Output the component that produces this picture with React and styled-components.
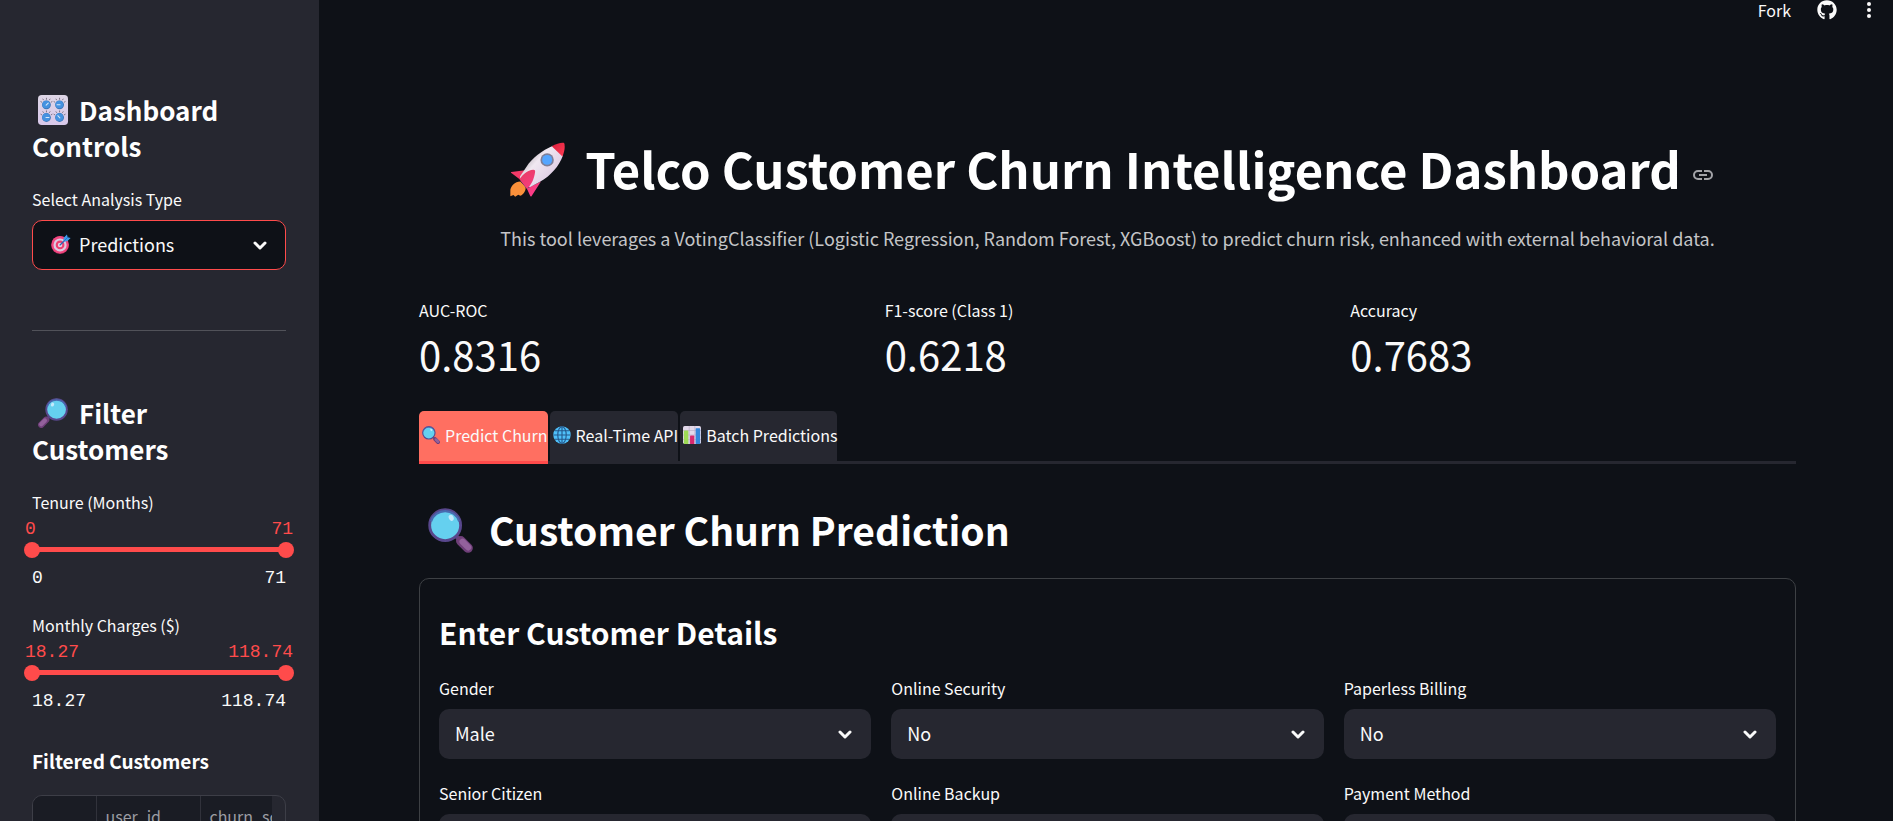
import React, { useId, useState } from 'react';
import styled, { createGlobalStyle, css } from 'styled-components';
import { FaGithub } from 'react-icons/fa';

const GlobalStyle = createGlobalStyle`
  *, *::before, *::after { box-sizing: border-box; }
  body {
    margin: 0;
    background: #0e1117;
    color: #fafafa;
    font-family: "Noto Sans CJK SC", "Noto Sans", sans-serif;
    font-size: 16px;
  }
  h1, h2, h3, h4, p { margin: 0; }
  button, select, input { font: inherit; color: inherit; }
`;

/* ---------- page frame ---------- */

const Page = styled.div`
  display: flex;
  height: 100vh;
`;

const pane = css`
  overflow-x: hidden;
  overflow-y: auto;
  scrollbar-width: none;
`;

const Sidebar = styled.aside`
  ${pane}
  flex: 0 0 319px;
  padding: 92px 33px 0 32px;
  background: #262730;
`;

const Main = styled.main`
  ${pane}
  flex: 1;
  min-width: 0;
`;

const Toolbar = styled.header`
  display: flex;
  justify-content: flex-end;
  gap: 26px;
  height: 20px;
  padding-right: 18px;
`;

const ToolButton = styled.button`
  display: flex;
  align-items: center;
  justify-content: center;
  min-width: 12px;
  height: 20px;
  padding: 0;
  border: 0;
  background: none;
  line-height: 20px;
  cursor: pointer;
`;

const Content = styled.div`
  padding: 115px 97px 80px 100px;
`;

/* ---------- text ---------- */

const PageTitle = styled.h1`
  color: #fff;
  font-size: 49px;
  font-weight: 700;
  line-height: 66px;
  text-align: center;
`;

const AnchorLink = styled.a`
  display: inline-block;
  margin-left: 12px;
  color: #a3a4a8;
  line-height: 0;
  vertical-align: 9px;
`;

const Intro = styled.p`
  margin-top: 22px;
  color: #c4c5c7;
  font-size: 18px;
  line-height: 30px;
  text-align: center;
`;

const SectionTitle = styled.h2`
  margin: 38px 0 22px;
  color: #fff;
  font-size: 39px;
  font-weight: 700;
  line-height: 54px;
`;

const FormTitle = styled.h3`
  margin-bottom: 23px;
  color: #fff;
  font-size: 30px;
  font-weight: 700;
  line-height: 42px;
`;

const SideTitle = styled.h2`
  margin-bottom: 23px;
  color: #fff;
  font-size: 26px;
  font-weight: 700;
  line-height: 36px;
`;

const SideSubtitle = styled.h4`
  margin: 35px 0 20px;
  color: #fff;
  font-size: 19px;
  font-weight: 700;
  line-height: 28px;
`;

const Divider = styled.hr`
  height: 1px;
  margin: 60px 0 64px;
  border: 0;
  background: #515259;
`;

/* ---------- emoji drawings ---------- */

const Emoji = styled.svg`
  display: inline-block;
  flex: none;
  width: ${p => p.$size}px;
  height: ${p => p.$size}px;
  margin: 0 ${p => p.$after || 0}px 0 ${p => p.$before || 0}px;
  vertical-align: ${p => p.$drop || 0}px;
`;

function Rocket(props) {
  return (
    <Emoji viewBox="0 0 32 32" aria-hidden="true" {...props}>
      <defs>
        <linearGradient id="rk-body" x1="10" y1="8" x2="24" y2="20" gradientUnits="userSpaceOnUse">
          <stop stopColor="#b9b2ba" /><stop offset=".35" stopColor="#f0e8f1" /><stop offset="1" stopColor="#e0cfe6" />
        </linearGradient>
        <linearGradient id="rk-fin" x1="8" y1="18" x2="17" y2="30" gradientUnits="userSpaceOnUse">
          <stop stopColor="#e93d68" /><stop offset="1" stopColor="#ff3b8d" />
        </linearGradient>
        <linearGradient id="rk-nose" x1="24" y1="2" x2="31" y2="8" gradientUnits="userSpaceOnUse">
          <stop stopColor="#d9203e" /><stop offset="1" stopColor="#ff3a52" />
        </linearGradient>
      </defs>
      <path d="M6 23c-3 0-6 3-5.8 5.500L.2 31.500l1.800-.7 1 1 1.800-1.100 1.200.6C8 30.500 9.500 28 9 26z" fill="#f9903a" />
      <path d="M6 22.500 8.500 21l3.500 5-1.800 1.800z" fill="#47407e" />
      <path d="M11 16.200.8 17.400C.3 17.600.6 18 1 18.200L6 22z" fill="#f23a68" />
      <path d="m18 23-5.500 8.600c-.3.300-.7.100-.8-.3L9.800 27z" fill="url(#rk-fin)" />
      <path d="M25 2.200c-6.500 2.800-12 7-15.500 12.300L5.800 20c-.6 1.100 5 6.500 6 6.200l5.400-3C24 19.500 28.500 14 30.800 7.800z" fill="url(#rk-body)" />
      <path d="M24.300 2.500C27 1 30 .2 31.500.6c.7 1.500.2 5.200-1 7.800z" fill="url(#rk-nose)" />
      <path d="M5.600 21.800c1.500-2.800 4.500-5.500 8-5.700.7 0 1.200.5 1 1.300-.5 4-2.300 7.700-4.800 9.800z" fill="url(#rk-fin)" />
      <circle cx="21.600" cy="10.400" r="3.900" fill="#7e7f99" />
      <circle cx="21.600" cy="10.400" r="2.900" fill="#54a5ff" />
    </Emoji>
  );
}

function Knobs(props) {
  const dials = [[9, 10.500, 45], [23, 10.500, -90], [9, 24, 90], [23, 24, -45]];
  return (
    <Emoji viewBox="0 0 32 32" aria-hidden="true" {...props}>
      <defs>
        <linearGradient id="kn-bg" x1="0" y1="0" x2="0" y2="1">
          <stop stopColor="#ded6e6" /><stop offset="1" stopColor="#d8c8ea" />
        </linearGradient>
      </defs>
      <rect width="32" height="32" rx="4" fill="url(#kn-bg)" />
      {dials.map(([x, y, turn]) => (
        <g key={`${x}-${y}`} transform={`translate(${x} ${y})`}>
          <path d="M0-7.500v2M-4-6.500l1 1.500M4-6.500l-1 1.500M-6.300-3.600l1.600.9M6.300-3.600l-1.600.9" stroke="#77707f" strokeWidth="1" />
          <circle r="4.700" fill="#3a76b8" />
          <circle cx="-.3" cy="-.4" r="4.100" fill="#4592e0" />
          <path d="M0 .5v-3.200" stroke="#d5e9fb" strokeWidth="1.100" strokeLinecap="round" transform={`rotate(${turn})`} />
        </g>
      ))}
    </Emoji>
  );
}

function Magnifier({ flipped, ...props }) {
  return (
    <Emoji viewBox="0 0 32 32" aria-hidden="true" {...props}>
      <g transform={flipped ? 'translate(32 0) scale(-1 1)' : undefined}>
        <path d="m19.500 19.500 3 3" stroke="#63427f" strokeWidth="3" />
        <path d="m23.300 23.300 5.200 5.200" stroke="#6f3f79" strokeWidth="6.800" strokeLinecap="round" />
        <path d="m24.600 24 4 4" stroke="#93619c" strokeWidth="4.400" strokeLinecap="round" />
        <circle cx="12.200" cy="12.200" r="11.300" fill="#65d0ef" />
        <circle cx="12.200" cy="12.200" r="11" fill="none" stroke="#58478c" strokeWidth="2" />
        <path d="M2.200 9.500a10.500 10.500 0 0 1 20 0" fill="none" stroke="#486bb0" strokeWidth="1.500" />
        <ellipse cx="16.500" cy="7" rx="1.700" ry="2.200" fill="#c3e9fb" transform="rotate(-25 16.500 7)" />
      </g>
    </Emoji>
  );
}

function Target(props) {
  return (
    <Emoji viewBox="0 0 32 32" aria-hidden="true" {...props}>
      <circle cx="14.500" cy="17.500" r="14.300" fill="#c92f68" />
      <circle cx="14.500" cy="17" r="13.700" fill="#f0487f" />
      <circle cx="14.500" cy="17.500" r="10.500" fill="#dccbe2" />
      <circle cx="14.500" cy="17.500" r="7" fill="#ed3f70" />
      <circle cx="14.500" cy="17.500" r="3.600" fill="#e7d3e4" />
      <path d="m14.500 17.500 8-8" stroke="#2b65b4" strokeWidth="2" strokeLinecap="round" />
      <path d="m20 12 .3-6L25.500.6l1.200 4.600 4.700 1.300-5.400 5.200z" fill="#3f9bed" />
      <path d="m20.500 11.500 7-7" stroke="#1f6fc4" strokeWidth="1.300" />
    </Emoji>
  );
}

function Globe(props) {
  return (
    <Emoji viewBox="0 0 32 32" aria-hidden="true" {...props}>
      <circle cx="16" cy="16" r="15.500" fill="#4fc0fa" />
      <g fill="none" stroke="#24588c" strokeWidth="2">
        <ellipse cx="16" cy="16" rx="7.500" ry="15" />
        <path d="M16 1v30M1 16h30M3.500 8.500h25M3.500 23.500h25" />
      </g>
    </Emoji>
  );
}

function BarChart(props) {
  return (
    <Emoji viewBox="0 0 32 32" aria-hidden="true" {...props}>
      <rect width="32" height="32" rx="3" fill="#e3d9ea" />
      <path d="M0 8h32M0 16h32M0 24h32M11 0v32M21 0v32" stroke="#bcaecb" strokeWidth="1.200" />
      <rect x="1.500" y="8" width="8" height="24" rx="1" fill="#9ddb55" />
      <rect x="12.500" y="17" width="7.500" height="15" rx="1" fill="#d9296f" />
      <rect x="22.500" y="4" width="8" height="28" rx="1" fill="#3487dc" />
    </Emoji>
  );
}

/* ---------- select ---------- */

const FieldLabel = styled.label`
  display: block;
  margin-bottom: 9px;
  line-height: 24px;
`;

const SelectBox = styled.div`
  position: relative;
`;

const NativeSelect = styled.select`
  display: block;
  width: 100%;
  height: 50px;
  padding: 0 40px 3px ${p => (p.$icon ? 46 : 15)}px;
  appearance: none;
  border: 1px solid ${p => (p.$focused ? '#ff4b4b' : 'transparent')};
  border-radius: 10px;
  outline: none;
  background: ${p => (p.$focused ? '#0e1117' : '#262730')};
  font-size: 18px;
`;

const SelectMark = styled.span`
  position: absolute;
  inset: 0 auto 2px 19px;
  display: flex;
  align-items: center;
  pointer-events: none;
`;

const ChevronMark = styled.svg`
  position: absolute;
  top: 21px;
  right: 19px;
  width: 14px;
  height: 9px;
  fill: none;
  stroke: #fafafa;
  stroke-width: 3px;
  stroke-linecap: round;
  stroke-linejoin: round;
  pointer-events: none;
`;

function SelectField({ label, options, icon, focused }) {
  const id = useId();
  return (
    <div>
      <FieldLabel htmlFor={id}>{label}</FieldLabel>
      <SelectBox>
        <NativeSelect id={id} $icon={!!icon} $focused={focused}>
          {options.map(o => <option key={o}>{o}</option>)}
        </NativeSelect>
        {icon && <SelectMark>{icon}</SelectMark>}
        <ChevronMark viewBox="0 0 14 9" aria-hidden="true"><path d="m2 2 5 5 5-5" /></ChevronMark>
      </SelectBox>
    </div>
  );
}

/* ---------- range slider ---------- */

const SliderGroup = styled.fieldset`
  min-width: 0;
  margin: 0;
  padding: 0;
  border: 0;
  & + & { margin-top: 24px; }
`;

const SliderLegend = styled.legend`
  padding: 0;
  line-height: 24px;
`;

const SliderValues = styled.div`
  display: flex;
  justify-content: space-between;
  margin: ${p => (p.$current ? '4px -7px 2px' : '10px 0 0')};
  color: ${p => (p.$current ? '#ff4b4b' : '#fafafa')};
  font-family: "Liberation Mono", monospace;
  font-size: 18px;
  line-height: 22px;
`;

const SliderTrack = styled.div`
  position: relative;
  height: 15px;
  margin: 0 -8px;
  &::before {
    content: "";
    display: block;
    height: 15px;
    margin: 0 8px;
    background: linear-gradient(#ff4b4b, #ff4b4b) center / 100% 5px no-repeat;
  }
`;

const SliderInput = styled.input`
  position: absolute;
  inset: 0;
  width: 100%;
  height: 15px;
  margin: 0;
  appearance: none;
  background: none;
  pointer-events: none;
  &::-webkit-slider-thumb {
    width: 16px;
    height: 16px;
    appearance: none;
    border: 0;
    border-radius: 50%;
    background: #ff4b4b;
    pointer-events: auto;
  }
`;

function RangeSlider({ label, min, max, step }) {
  const [low, setLow] = useState(min);
  const [high, setHigh] = useState(max);
  return (
    <SliderGroup>
      <SliderLegend>{label}</SliderLegend>
      <SliderValues $current><span>{low}</span><span>{high}</span></SliderValues>
      <SliderTrack>
        <SliderInput type="range" aria-label={`${label} minimum`} min={min} max={max} step={step} value={low}
          onChange={e => setLow(Math.min(+e.target.value, high))} />
        <SliderInput type="range" aria-label={`${label} maximum`} min={min} max={max} step={step} value={high}
          onChange={e => setHigh(Math.max(+e.target.value, low))} />
      </SliderTrack>
      <SliderValues><span>{min}</span><span>{max}</span></SliderValues>
    </SliderGroup>
  );
}

/* ---------- customers table ---------- */

const TableFrame = styled.div`
  padding-right: 13px;
  overflow: hidden;
  border: 1px solid #3d3e47;
  border-radius: 10px;
`;

const TableClip = styled.div`
  overflow: hidden;
`;

const CustomerTable = styled.table`
  width: 300px;
  table-layout: fixed;
  border-collapse: collapse;
  background: #1a1c24;
  color: #9c9da3;
`;

const HeadCell = styled.th`
  width: ${p => p.$width}px;
  height: 40px;
  padding: 0 9px;
  border-right: 1px solid #31323b;
  border-bottom: 1px solid #31323b;
  font-weight: 400;
  line-height: 40px;
  text-align: left;
`;

/* ---------- metrics ---------- */

const Columns = styled.div`
  display: grid;
  grid-template-columns: repeat(3, minmax(0, 1fr));
  gap: 22px 20px;
`;

const Metrics = styled(Columns)`
  margin: 45px 0 32px;
`;

const MetricLabel = styled.div`
  line-height: 24px;
`;

const MetricValue = styled.div`
  margin-top: 7px;
  font-size: 40px;
  line-height: 50px;
`;

/* ---------- tabs ---------- */

const TabBar = styled.div`
  display: flex;
  gap: 2px;
  box-shadow: inset 0 -3px #262730;
`;

const Tab = styled.button`
  display: flex;
  align-items: center;
  height: 53px;
  padding: 0 0 2px;
  border: 0;
  border-bottom: 3px solid ${p => (p.$active ? '#ff4b4b' : '#262730')};
  border-radius: 5px 5px 0 0;
  background: ${p => (p.$active ? '#ff6f61' : '#262730')};
  white-space: nowrap;
  cursor: pointer;
`;

/* ---------- form ---------- */

const FormCard = styled.form`
  padding: 32px 19px 20px;
  border: 1px solid #3d4044;
  border-radius: 10px;
`;

const metrics = [
  ['AUC-ROC', '0.8316'],
  ['F1-score (Class 1)', '0.6218'],
  ['Accuracy', '0.7683'],
];

const tabs = [
  ['Predict Churn', Magnifier],
  ['Real-Time API', Globe],
  ['Batch Predictions', BarChart],
];

const fields = [
  ['Gender', ['Male', 'Female']],
  ['Online Security', ['No', 'Yes']],
  ['Paperless Billing', ['No', 'Yes']],
  ['Senior Citizen', ['No', 'Yes']],
  ['Online Backup', ['No', 'Yes']],
  ['Payment Method', ['Electronic check', 'Mailed check']],
];

export default function App() {
  const [tab, setTab] = useState('Predict Churn');
  return (
    <>
      <GlobalStyle />
      <Page>
        <Sidebar>
          <SideTitle><Knobs $size={30} $before={6} $after={11} $drop={-4} />Dashboard Controls</SideTitle>
          <SelectField label="Select Analysis Type" options={['Predictions']} icon={<Target $size={20} />} focused />
          <Divider />
          <SideTitle><Magnifier flipped $size={30} $before={6} $after={11} $drop={-4} />Filter Customers</SideTitle>
          <RangeSlider label="Tenure (Months)" min={0} max={71} step={1} />
          <RangeSlider label="Monthly Charges ($)" min={18.27} max={118.74} step={0.01} />
          <SideSubtitle>Filtered Customers</SideSubtitle>
          <TableFrame>
            <TableClip>
              <CustomerTable>
                <thead>
                  <tr>
                    <HeadCell $width={63} aria-label="Row" />
                    <HeadCell $width={104}>user_id</HeadCell>
                    <HeadCell $width={133}>churn_score</HeadCell>
                  </tr>
                </thead>
              </CustomerTable>
            </TableClip>
          </TableFrame>
        </Sidebar>
        <Main>
          <Toolbar>
            <ToolButton>Fork</ToolButton>
            <ToolButton aria-label="View source on GitHub"><FaGithub size={20} /></ToolButton>
            <ToolButton aria-label="Main menu">
              <svg width="6" height="16" viewBox="0 0 6 16" fill="currentColor">
                <circle cx="3" cy="2" r="2" /><circle cx="3" cy="8" r="2" /><circle cx="3" cy="14" r="2" />
              </svg>
            </ToolButton>
          </Toolbar>
          <Content>
            <PageTitle id="title">
              <Rocket $size={55} $before={8} $after={20} $drop={-8} />Telco Customer Churn Intelligence Dashboard
              <AnchorLink href="#title" aria-label="Link to heading">
                <svg width="20" height="10" viewBox="0 0 20 10" fill="none" stroke="currentColor" strokeWidth="2">
                  <path d="M9 1H5a4 4 0 0 0 0 8h4M11 1h4a4 4 0 0 1 0 8h-4M6 5h8" />
                </svg>
              </AnchorLink>
            </PageTitle>
            <Intro>
              This tool leverages a VotingClassifier (Logistic Regression, Random Forest, XGBoost) to predict churn risk, enhanced with external behavioral data.
            </Intro>
            <Metrics>
              {metrics.map(([name, value]) => (
                <div key={name}>
                  <MetricLabel>{name}</MetricLabel>
                  <MetricValue>{value}</MetricValue>
                </div>
              ))}
            </Metrics>
            <TabBar role="tablist">
              {tabs.map(([name, Icon]) => (
                <Tab key={name} role="tab" aria-selected={tab === name} $active={tab === name} onClick={() => setTab(name)}>
                  <Icon $size={18} $before={3} $after={5} />{name}
                </Tab>
              ))}
            </TabBar>
            <SectionTitle><Magnifier $size={45} $before={9} $after={16} $drop={-7} />Customer Churn Prediction</SectionTitle>
            <FormCard>
              <FormTitle>Enter Customer Details</FormTitle>
              <Columns>
                {fields.map(([label, options]) => (
                  <SelectField key={label} label={label} options={options} />
                ))}
              </Columns>
            </FormCard>
          </Content>
        </Main>
      </Page>
    </>
  );
}
